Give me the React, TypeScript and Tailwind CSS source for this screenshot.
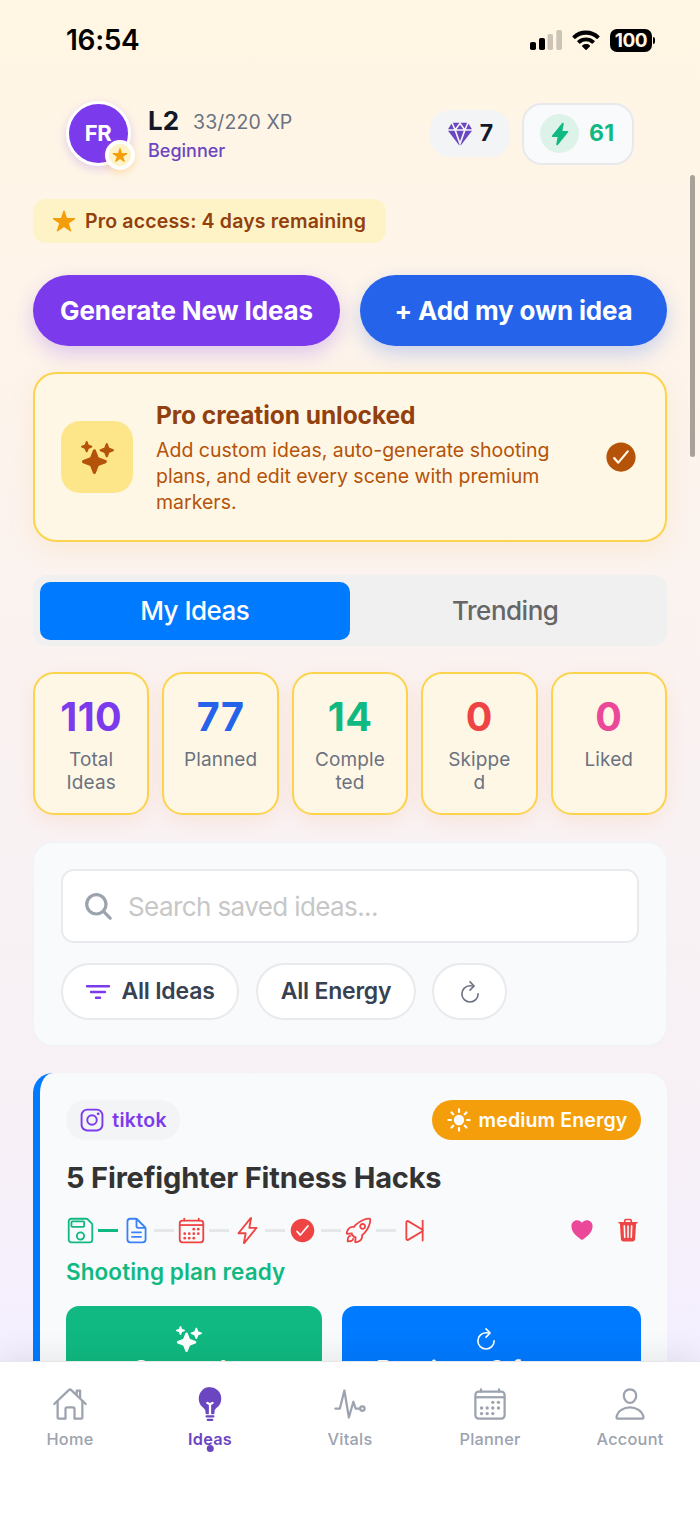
import React from "react";
import {
  IoBulb, IoCalendarOutline, IoCheckmarkCircle, IoDiamond, IoDocumentTextOutline, IoFilter, IoFlash,
  IoFlashOutline, IoHeart, IoHomeOutline, IoLogoInstagram, IoPersonOutline, IoPlaySkipForwardOutline,
  IoPulseOutline, IoRefreshOutline, IoRocketOutline, IoSaveOutline, IoSearch, IoSparkles, IoStar,
  IoSunny, IoTrash,
} from "react-icons/io5";

function StatusBar() {
  return (
    <div className="flex h-[80px] shrink-0 items-center justify-between pl-[66px] pr-[45px] text-black">
      <span className="text-[28px] font-semibold leading-none tracking-[-0.3px]">16:54</span>
      <div className="flex items-center">
        <svg width="32" height="20" viewBox="0 0 32 20">
          <rect x="0" y="12" width="6" height="8" rx="1.8" />
          <rect x="9" y="8" width="6" height="12" rx="1.8" />
          <rect x="17.5" y="4" width="5.5" height="16" rx="1.8" opacity=".2" />
          <rect x="26.3" y="0" width="5.7" height="20" rx="1.8" opacity=".2" />
        </svg>
        <svg className="ml-[10px]" width="28" height="21" viewBox="0 0 28 21">
          <path d="M14 .6c5.200 0 9.900 2 13.400 5.300.3.300.3.700 0 1l-1.900 1.900c-.3.300-.7.300-1 0A15.200 15.200 0 0 0 14 4.700 15.200 15.200 0 0 0 3.500 8.800c-.3.300-.7.300-1 0L.6 6.900c-.3-.3-.3-.7 0-1A19.300 19.300 0 0 1 14 .6Z" />
          <path d="M14 7.400c3.300 0 6.300 1.200 8.600 3.300.3.300.3.700 0 1l-1.900 1.900c-.3.300-.7.300-1 0a8.400 8.400 0 0 0-11.400 0c-.3.300-.7.300-1 0l-1.900-1.900c-.3-.3-.3-.7 0-1A12.700 12.700 0 0 1 14 7.400Z" />
          <path d="M14 14.100c1.500 0 2.800.5 3.900 1.400.3.300.3.700 0 1l-3.300 3.300c-.3.300-.8.300-1.100 0l-3.300-3.300c-.3-.3-.3-.7 0-1a6 6 0 0 1 3.800-1.400Z" />
        </svg>
        <div className="ml-[10px] flex h-[23px] w-[42px] items-center justify-center rounded-[7px] bg-black text-[19px] font-bold leading-none tracking-[-0.5px] text-[#fff6e4]">100</div>
        <div className="ml-[1px] h-[7px] w-[2px] rounded-r-[2px] bg-black" />
      </div>
    </div>
  );
}

function Header() {
  return (
    <div className="mt-[21px] flex h-[65px] shrink-0 items-center px-[66px]">
      <div className="relative flex size-[65px] shrink-0 items-center justify-center rounded-full border-[3px] border-white bg-[#7c3aed] pr-[1px] text-[22px] font-bold tracking-[-0.5px] text-white shadow-[0_3px_10px_rgba(124,58,237,0.22)]">
        FR
        <div className="absolute left-[35.500px] top-[36px] flex size-[30px] items-center justify-center rounded-full border-[4px] border-white bg-[#fef3c7] text-[#f59e0b] shadow-[0_3px_7px_rgba(245,158,11,0.25)]">
          <IoStar size={16} className="shrink-0" />
        </div>
      </div>
      <div className="ml-[17px] flex flex-col">
        <div className="flex items-center">
          <span className="text-[26px] font-bold leading-[31px] text-[#111827]">L2</span>
          <span className="ml-[14px] pt-[3px] text-[19.500px] leading-[28px] tracking-[0.1px] text-[#6b7280]">33/220 XP</span>
        </div>
        <span className="mt-[3px] text-[18px] font-medium leading-[24px] text-[#6b46c1]">Beginner</span>
      </div>
      <div className="ml-auto flex items-center">
        <div className="flex h-[47px] w-[80px] items-center justify-center gap-[7px] rounded-[20px] bg-[#f3f4f6]">
          <IoDiamond size={26} className="text-[#6b46c1]" />
          <span className="text-[23px] font-bold text-[#111827]">7</span>
        </div>
        <div className="ml-[12px] flex h-[62px] w-[112px] items-center rounded-[20px] border-2 border-[#e7e9ed] bg-[#f9fafb] pl-[16px]">
          <div className="flex size-[39px] items-center justify-center rounded-full bg-[#ddf2e9] text-[#10b981]">
            <IoFlash size={24} />
          </div>
          <span className="ml-[10px] text-[23px] font-bold tracking-[0.3px] text-[#10b981]">61</span>
        </div>
      </div>
    </div>
  );
}

function ProCard() {
  return (
    <div className="mt-[26.300px] flex h-[170px] items-center rounded-[23px] border-2 border-[#fcd34d] bg-[#fff7e5] px-[26px] shadow-[0_8px_26px_rgba(245,158,11,0.1)]">
      <div className="flex size-[72px] shrink-0 items-center justify-center rounded-[19px] bg-[#fde68a] text-[#b45309]">
        <IoSparkles size={33} />
      </div>
      <div className="ml-[23px] flex flex-col">
        <h2 className="text-[24.500px] font-bold leading-[30px] tracking-[-0.07px] text-[#92400e]">Pro creation unlocked</h2>
        <p className="mt-[6.500px] whitespace-nowrap text-[19.500px] leading-[26px] text-[#b45309]">
          Add custom ideas, auto-generate shooting<br />plans, and edit every scene with premium<br />markers.
        </p>
      </div>
      <IoCheckmarkCircle size={36} className="ml-auto text-[#b45309]" />
    </div>
  );
}

const stats = [
  { value: "110", lines: ["Total", "Ideas"], color: "text-[#7c3aed]" },
  { value: "77", lines: ["Planned"], color: "text-[#2563eb]" },
  { value: "14", lines: ["Comple", "ted"], color: "text-[#10b981]" },
  { value: "0", lines: ["Skippe", "d"], color: "text-[#ef4444]" },
  { value: "0", lines: ["Liked"], color: "text-[#ec4899]" },
];

function Stats() {
  return (
    <div className="mt-[26px] grid h-[142.700px] grid-cols-5 gap-[13px]">
      {stats.map((s) => (
        <div key={s.lines[0]} className="flex flex-col items-center rounded-[21px] border-2 border-[#fcd34d] bg-[#fff7e5] pt-[19px] shadow-[0_6px_20px_rgba(245,130,60,0.12)]">
          <span className={"text-[39.500px] font-bold leading-[48px] tracking-[0.4px] " + s.color}>{s.value}</span>
          <span className="mt-[6.500px] text-center text-[19px] leading-[23.500px] tracking-[0.1px] text-[#6b7280]">
            {s.lines.map((l) => <span key={l} className="block">{l}</span>)}
          </span>
        </div>
      ))}
    </div>
  );
}

function SearchPanel() {
  const pill = "flex h-[57px] items-center justify-center rounded-full border-2 border-[#e8eaed] bg-white text-[23px] font-semibold tracking-[-0.2px] text-[#374151]";
  return (
    <div className="mt-[26.700px] h-[204.600px] rounded-[20px] border border-[#eef4f9] bg-[#f9fafc] px-[27px] pt-[26.500px]">
      <div className="flex h-[74px] items-center rounded-[13px] border-2 border-[#e8eaed] bg-white pl-[19px]">
        <IoSearch size={33} className="text-[#9ca3af]" />
        <span className="ml-[13px] text-[26px] tracking-[-0.600px] text-[#c7c7c7]">Search saved ideas...</span>
      </div>
      <div className="mt-[20px] flex">
        <div className={pill + " w-[178px]"}>
          <IoFilter size={26} className="mr-[10px] text-[#7c3aed]" />All Ideas
        </div>
        <div className={pill + " ml-[17px] w-[160px]"}>All Energy</div>
        <div className={pill + " ml-[16px] w-[75px]"}>
          <IoRefreshOutline size={26} className="text-[#6b7280]" />
        </div>
      </div>
    </div>
  );
}

const steps = [
  { Icon: IoSaveOutline, color: "text-[#10b981]", line: "bg-[#10b981]" },
  { Icon: IoDocumentTextOutline, color: "text-[#3b82f6]", line: "bg-[#e5e7eb]" },
  { Icon: IoCalendarOutline, color: "text-[#ef4444]", line: "bg-[#e5e7eb]" },
  { Icon: IoFlashOutline, color: "text-[#ef4444]", line: "bg-[#e5e7eb]" },
  { Icon: IoCheckmarkCircle, color: "text-[#ef4444]", line: "bg-[#e5e7eb]" },
  { Icon: IoRocketOutline, color: "text-[#ef4444]", line: "bg-[#e5e7eb]" },
  { Icon: IoPlaySkipForwardOutline, color: "text-[#ef4444]", line: "" },
];

function IdeaCard() {
  return (
    <div className="mt-[27px] h-[420px] shrink-0 rounded-[20px] border-l-[7px] border-[#007aff] bg-[#f9fafb] pl-[26px] pr-[26px] pt-[27px]">
      <div className="flex justify-between">
        <div className="flex h-[40px] w-[114px] items-center justify-center gap-[7px] rounded-[20px] bg-[#f3f4f6] text-[#7c3aed]">
          <IoLogoInstagram size={26} />
          <span className="text-[19.500px] font-semibold tracking-[0.3px]">tiktok</span>
        </div>
        <div className="flex h-[40px] w-[209px] items-center justify-center gap-[7px] rounded-[20px] bg-[#f59e0b] text-white">
          <IoSunny size={26} />
          <span className="text-[19.500px] font-semibold tracking-[0.15px]">medium Energy</span>
        </div>
      </div>
      <h3 className="mt-[20px] text-[29px] font-bold leading-[36px] tracking-[-0.16px] text-[#333]">5 Firefighter Fitness Hacks</h3>
      <div className="mt-[19px] flex h-[30px] items-center">
        {steps.map(({ Icon, color, line }, i) => (
          <React.Fragment key={i}>
            <Icon size={29} className={"shrink-0 " + color} />
            {line && <div className={"mx-[3.300px] h-[3.300px] w-[20px] " + line} />}
          </React.Fragment>
        ))}
        <IoHeart size={26} className="ml-auto mr-[20px] text-[#ec4899]" />
        <IoTrash size={26} className="text-[#ef4444]" />
      </div>
      <div className="mt-[13px] text-[22.500px] font-semibold leading-[28px] tracking-[0.08px] text-[#10b981]">Shooting plan ready</div>
      <div className="mt-[19.500px] flex gap-[20px] text-[25.500px] font-semibold leading-[30px] text-white">
        <div className="flex h-[100px] w-[256px] flex-col items-center rounded-[13px] bg-[#10b981] pt-[20px]">
          <IoSparkles size={26} className="mr-[10px]" />
          <span className="mt-[3px]">Open plan</span>
        </div>
        <div className="flex h-[100px] flex-1 flex-col items-center rounded-[13px] bg-[#007aff] pt-[20px]">
          <IoRefreshOutline size={26} className="mr-[11px]" />
          <span className="mt-[3px]">Remix to 3 formats</span>
        </div>
      </div>
    </div>
  );
}

const tabs = [
  { label: "Home", Icon: IoHomeOutline },
  { label: "Ideas", Icon: IoBulb, active: true },
  { label: "Vitals", Icon: IoPulseOutline },
  { label: "Planner", Icon: IoCalendarOutline },
  { label: "Account", Icon: IoPersonOutline },
];

function TabBar() {
  return (
    <nav className="relative grid h-[153px] shrink-0 grid-cols-5 border-t border-[#e5e7eb] bg-white pt-[22px] shadow-[0_-5px_28px_rgba(0,0,0,0.08)]">
      {tabs.map(({ label, Icon, active }) => (
        <div key={label} className={"relative flex flex-col items-center pt-[2px] " + (active ? "font-semibold text-[#6b46c1]" : "font-medium text-[#9ca3af]")}>
          <Icon size={36} className="mr-[1px]" />
          <span className="mt-[6.500px] text-[16.300px] leading-[20px] tracking-[0.27px]">{label}</span>
          {active && <span className="absolute left-1/2 top-[61px] size-[6.500px] -translate-x-1/2 rounded-full bg-[#6b46c1]" />}
        </div>
      ))}
    </nav>
  );
}

export default function App() {
  return (
    <div className="relative flex h-[1514px] w-[700px] flex-col overflow-hidden bg-[linear-gradient(180deg,#fff6e3_0%,#fef4ea_20%,#fbf3ef_38%,#f9f2f3_54%,#f7f0f5_72%,#f4efff_90%)] font-['Inter',sans-serif]">
      <main className="flex h-[1361px] shrink-0 flex-col overflow-hidden">
        <StatusBar />
        <Header />
        <div className="flex shrink-0 flex-col px-[33px] pt-[33px]">
          <div className="flex h-[44px] w-[353px] items-center rounded-[13px] bg-[#fef3c7] pl-[19px]">
            <IoStar size={24} className="text-[#f59e0b]" />
            <span className="ml-[9px] pt-[2px] text-[19.500px] font-semibold tracking-[0.16px] text-[#92400e]">Pro access: 4 days remaining</span>
          </div>
          <div className="mt-[32px] grid h-[71px] grid-cols-2 gap-[20px] text-[26px] font-bold text-white">
            <button className="rounded-full bg-[#7c3aed] tracking-[-0.13px] shadow-[0_8px_20px_rgba(124,58,237,0.24)]">Generate New Ideas</button>
            <button className="rounded-full bg-[#2563eb] tracking-[-0.18px] shadow-[0_8px_20px_rgba(37,99,235,0.24)]">+ Add my own idea</button>
          </div>
          <ProCard />
          <div className="mt-[33px] flex h-[71px] rounded-[14px] bg-[#f0f0f0] p-[6.500px] text-[26px] font-medium tracking-[-0.5px]">
            <div className="flex flex-1 items-center justify-center rounded-[10px] bg-[#007aff] text-white">My Ideas</div>
            <div className="flex flex-1 items-center justify-center text-[#666]">Trending</div>
          </div>
          <Stats />
          <SearchPanel />
          <IdeaCard />
        </div>
      </main>
      <TabBar />
      <div className="absolute left-[690px] top-[175px] h-[282px] w-[5px] rounded-full bg-[#a7a198]" />
    </div>
  );
}
